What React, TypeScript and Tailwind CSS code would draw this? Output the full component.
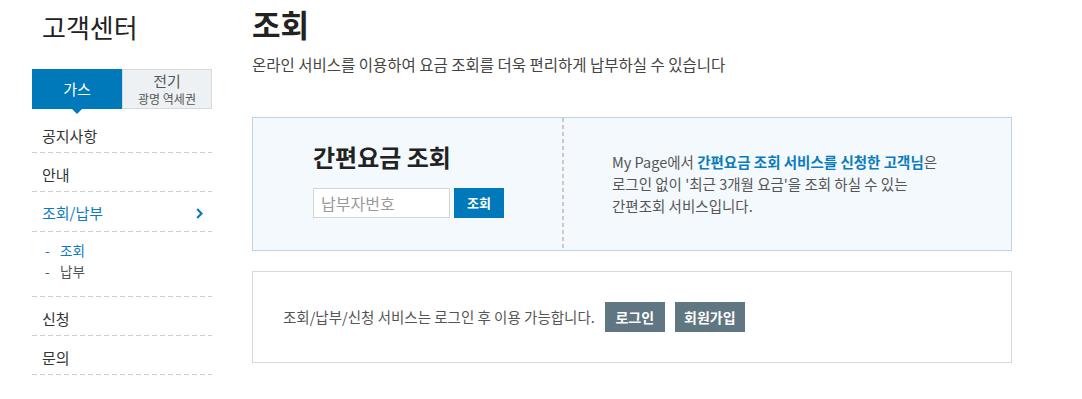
import React from "react";

const Dash = () => (
  <div className="h-px w-full bg-[linear-gradient(to_right,#cfcfcf_5px,transparent_5px)] bg-[length:8px_1px] bg-repeat-x" />
);

export default function App() {
  return (
    <div className="flex min-h-[399px] w-[1082px] bg-white pl-[32px] font-['Noto_Sans_CJK_KR',sans-serif] text-[#333]">
      {/* Sidebar */}
      <aside className="w-[180px] shrink-0">
        <h2 className="pl-[10px] pt-[10px] text-[26px] leading-[34px] text-[#222]">고객센터</h2>
        <div className="mt-[25px] flex h-[40px]">
          <div className="relative flex w-[90px] items-center justify-center bg-[#0079ba] text-[15px] text-white">
            가스
            <span className="absolute left-1/2 top-full -ml-[5px] h-0 w-0 border-x-[5px] border-t-[5px] border-x-transparent border-t-[#0079ba]" />
          </div>
          <div className="flex w-[90px] flex-col items-center justify-center border border-[#d6dadd] bg-[#eef1f3] text-[#555]">
            <span className="text-[15px] leading-[18px]">전기</span>
            <span className="text-[12px] leading-[17px]">광명 역세권</span>
          </div>
        </div>
        <ul>
          <li>
            <div className="pl-[10px] pt-[17px] pb-[6px] text-[15px] leading-[20px]">공지사항</div>
            <Dash />
          </li>
          <li>
            <div className="pl-[10px] pt-[12px] pb-[6px] text-[15px] leading-[20px]">안내</div>
            <Dash />
          </li>
          <li>
            <div className="flex items-center justify-between pl-[10px] pr-[9px] pt-[11px] pb-[8px] text-[15px] leading-[20px] text-[#0a7bbf]">
              <span>조회/납부</span>
              <svg width="7" height="11" viewBox="0 0 7 11">
                <polyline points="1.2,1 5.5,5.5 1.2,10" fill="none" stroke="#0a7bbf" strokeWidth="2.2" />
              </svg>
            </div>
            <Dash />
          </li>
          <li>
            <ul className="pl-[13px] pt-[8px] pb-[14px] text-[13.5px] leading-[21px]">
              <li className="flex text-[#0a7bbf]">
                <span className="w-[15px]">-</span>
                <span>조회</span>
              </li>
              <li className="flex text-[#555]">
                <span className="w-[15px]">-</span>
                <span>납부</span>
              </li>
            </ul>
            <Dash />
          </li>
          <li>
            <div className="pl-[10px] pt-[12px] pb-[6px] text-[15px] leading-[20px]">신청</div>
            <Dash />
          </li>
          <li>
            <div className="pl-[10px] pt-[12px] pb-[6px] text-[15px] leading-[20px]">문의</div>
            <Dash />
          </li>
        </ul>
      </aside>

      {/* Main */}
      <main className="ml-[40px] w-[760px] shrink-0">
        <h1 className="pt-[5px] text-[31px] font-bold leading-[38px] text-[#222]">조회</h1>
        <p className="mt-[11px] text-[15.5px] leading-[20px] text-[#444]">
          온라인 서비스를 이용하여 요금 조회를 더욱 편리하게 납부하실 수 있습니다
        </p>

        <section className="mt-[43px] flex h-[134px] border border-[#bdd5e1] bg-[#f3f9fd]">
          <div className="w-[309px] pl-[60px] pt-[24px]">
            <h3 className="text-[24px] font-bold leading-[30px] text-[#222]">간편요금 조회</h3>
            <div className="mt-[16px] flex">
              <input
                placeholder="납부자번호"
                className="h-[30px] w-[137px] border border-[#d5d5d5] bg-white pl-[7px] text-[16px] text-[#333] outline-none placeholder:text-[#9a9a9a]"
              />
              <button className="ml-[4px] h-[30px] w-[50px] bg-[#0079ba] text-[13px] font-bold text-white">
                조회
              </button>
            </div>
          </div>
          <div className="w-[2px] bg-[linear-gradient(to_bottom,#c9c9c9_4px,transparent_4px)] bg-[length:2px_7px] bg-repeat-y" />
          <div className="flex items-center pl-[48px] text-[14.5px] leading-[22px] text-[#555]">
            <p>
              My Page에서 <span className="font-bold text-[#0a7bbf]">간편요금 조회 서비스를 신청한 고객님</span>은
              <br />
              로그인 없이 '최근 3개월 요금'을 조회 하실 수 있는
              <br />
              간편조회 서비스입니다.
            </p>
          </div>
        </section>

        <section className="mt-[20px] flex h-[92px] items-center border border-[#d9d9d9] bg-white pl-[30px]">
          <p className="text-[14.5px] text-[#555]">조회/납부/신청 서비스는 로그인 후 이용 가능합니다.</p>
          <button className="ml-[10px] h-[30px] w-[60px] bg-[#607682] text-[14px] font-bold text-white">로그인</button>
          <button className="ml-[10px] h-[30px] w-[70px] bg-[#607682] text-[14px] font-bold text-white">회원가입</button>
        </section>
      </main>
    </div>
  );
}
